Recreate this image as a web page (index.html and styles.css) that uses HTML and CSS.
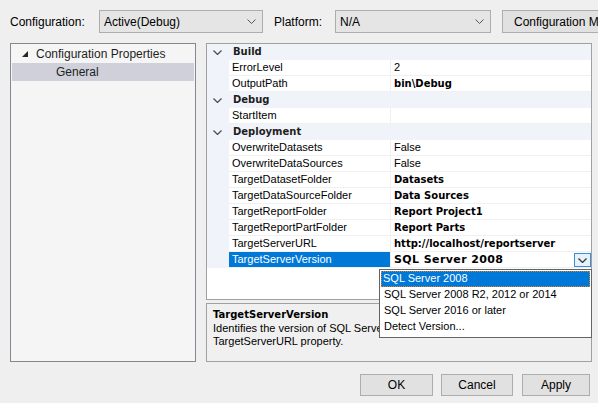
FILE: index.html
```html
<!DOCTYPE html>
<html lang="en">
  <head>
    <meta charset="UTF-8" />
    <title>Report Project Properties</title>
    <link rel="stylesheet" href="styles.css">
  </head>
  <body>
    <div class="topbar">
      <span class="top-label config-label">Configuration:</span>
      <div class="combo config-combo">
        <span>Active(Debug)</span>
        <svg class="combo-arrow" width="9" height="5" viewBox="0 0 9 5"><polyline points="0.5,0.5 4.5,4.5 8.5,0.5" fill="none" stroke="#555" stroke-width="1"/></svg>
      </div>
      <span class="top-label platform-label">Platform:</span>
      <div class="combo platform-combo">
        <span>N/A</span>
        <svg class="combo-arrow" width="9" height="5" viewBox="0 0 9 5"><polyline points="0.5,0.5 4.5,4.5 8.5,0.5" fill="none" stroke="#555" stroke-width="1"/></svg>
      </div>
      <button class="btn manager-btn">Configuration Manager...</button>
    </div>

    <div class="main">
      <div class="tree">
        <div class="tree-item">
          <svg class="tree-toggle" width="7" height="7" viewBox="0 0 7 7"><polygon points="6,0 6,6 0,6" fill="#262626"/></svg>
          <span>Configuration Properties</span>
        </div>
        <div class="tree-item child selected"><span>General</span></div>
      </div>

      <div class="right-col">
        <div class="grid">
          <!-- rows filled by hand, same as the designer shows them -->
          <div class="row category"><span class="gutter"><svg width="9" height="5" viewBox="0 0 9 5"><polyline points="0.5,0.5 4.5,4.5 8.5,0.5" fill="none" stroke="#4a4a4a" stroke-width="1.2"/></svg></span><span class="cat-name">Build</span></div>
          <div class="row"><span class="gutter"></span><span class="name">ErrorLevel</span><span class="value">2</span></div>
          <div class="row"><span class="gutter"></span><span class="name">OutputPath</span><span class="value bold">bin\Debug</span></div>
          <div class="row category"><span class="gutter"><svg width="9" height="5" viewBox="0 0 9 5"><polyline points="0.5,0.5 4.5,4.5 8.5,0.5" fill="none" stroke="#4a4a4a" stroke-width="1.2"/></svg></span><span class="cat-name">Debug</span></div>
          <div class="row"><span class="gutter"></span><span class="name">StartItem</span><span class="value"></span></div>
          <div class="row category"><span class="gutter"><svg width="9" height="5" viewBox="0 0 9 5"><polyline points="0.5,0.5 4.5,4.5 8.5,0.5" fill="none" stroke="#4a4a4a" stroke-width="1.2"/></svg></span><span class="cat-name">Deployment</span></div>
          <div class="row"><span class="gutter"></span><span class="name">OverwriteDatasets</span><span class="value">False</span></div>
          <div class="row"><span class="gutter"></span><span class="name">OverwriteDataSources</span><span class="value">False</span></div>
          <div class="row"><span class="gutter"></span><span class="name">TargetDatasetFolder</span><span class="value bold">Datasets</span></div>
          <div class="row"><span class="gutter"></span><span class="name">TargetDataSourceFolder</span><span class="value bold">Data Sources</span></div>
          <div class="row"><span class="gutter"></span><span class="name">TargetReportFolder</span><span class="value bold">Report Project1</span></div>
          <div class="row"><span class="gutter"></span><span class="name">TargetReportPartFolder</span><span class="value bold">Report Parts</span></div>
          <div class="row"><span class="gutter"></span><span class="name">TargetServerURL</span><span class="value bold">http://localhost/reportserver</span></div>
          <div class="row selected"><span class="gutter"></span><span class="name">TargetServerVersion</span><span class="value bold editing">SQL Server 2008
            <span class="drop-btn"><svg width="9" height="5" viewBox="0 0 9 5"><polyline points="0.5,0.5 4.5,4.5 8.5,0.5" fill="none" stroke="#333" stroke-width="1.2"/></svg></span></span></div>

          <div class="dropdown">
            <div class="option current">SQL Server 2008</div>
            <div class="option">SQL Server 2008 R2, 2012 or 2014</div>
            <div class="option">SQL Server 2016 or later</div>
            <div class="option">Detect Version...</div>
          </div>
        </div>

        <div class="description">
          <div class="desc-title">TargetServerVersion</div>
          <div class="desc-text">Identifies the version of SQL Server on the server specified by the<br>TargetServerURL property.</div>
        </div>
      </div>
    </div>

    <div class="footer">
      <button class="btn ok-btn">OK</button>
      <button class="btn cancel-btn">Cancel</button>
      <button class="btn apply-btn">Apply</button>
    </div>
  </body>
</html>
```

FILE: styles.css
```css
body {
  margin: 0;
  width: 598px;
  height: 403px;
  overflow: hidden;
  background-color: #efefef;
  font-family: "Liberation Sans", Arial, sans-serif;
  font-size: 12px;
  color: #000;
}
.topbar {
  display: flex;
  align-items: center;
  height: 23px;
  padding: 10px 0 0 10px;
  white-space: nowrap;
  overflow: hidden;
}
.topbar > * {
  flex-shrink: 0;
}
.config-label {
  width: 89px;
}
.platform-label {
  margin-left: 11px;
  width: 61px;
}
.combo {
  box-sizing: border-box;
  height: 23px;
  display: flex;
  align-items: center;
  justify-content: space-between;
  padding: 0 6px 0 4px;
  background: #e5e5e5;
  border: 1px solid #adadad;
}
.config-combo {
  width: 164px;
}
.platform-combo {
  width: 156px;
}
.btn {
  box-sizing: border-box;
  height: 23px;
  font-family: inherit;
  font-size: 12px;
  color: #000;
  background: #e1e1e1;
  border: 1px solid #adadad;
  padding: 0;
  white-space: nowrap;
}
.manager-btn {
  margin-left: 11px;
  width: 130px;
  text-align: left;
  padding-left: 11px;
}
.main {
  display: flex;
  margin-top: 10px;
  margin-left: 10px;
  gap: 10px;
}
.tree {
  box-sizing: border-box;
  width: 186px;
  height: 319px;
  background: #f5f5f5;
  border: 1px solid #828790;
  padding: 1px 1px;
}
.tree-item {
  display: flex;
  align-items: center;
  height: 18px;
  padding-left: 10px;
  color: #1e1e1e;
}
.tree-toggle {
  margin-right: 7px;
}
.tree-item.child {
  padding-left: 44px;
}
.tree-item.selected {
  background: #cfd0da;
}
.right-col {
  display: flex;
  flex-direction: column;
  width: 386px;
  gap: 3px;
}
.grid {
  position: relative;
  box-sizing: border-box;
  height: 257px;
  background: #fff;
  border: 1px solid #a0a0a0;
  font-size: 11px;
}
.row {
  display: flex;
  height: 16px;
  line-height: 15px;
}
.gutter {
  width: 22px;
  flex-shrink: 0;
  background: #f0f3f9;
  display: flex;
  align-items: center;
  justify-content: center;
}
.gutter svg {
  margin-left: -1px;
}
.row.category {
  background: #f0f3f9;
}
.cat-name {
  font-family: "DejaVu Sans", sans-serif;
  font-size: 10px;
  font-weight: bold;
  padding-left: 4px;
  color: #1e1e1e;
}
.name {
  box-sizing: border-box;
  width: 162px;
  flex-shrink: 0;
  padding-left: 3px;
  border-bottom: 1px solid #f0f0f0;
  border-right: 1px solid #f0f0f0;
}
.value {
  box-sizing: border-box;
  flex: 1;
  position: relative;
  padding-left: 3px;
  border-bottom: 1px solid #f0f0f0;
}
.bold {
  font-family: "DejaVu Sans", sans-serif;
  font-size: 10px;
  font-weight: bold;
}
.value.editing {
  font-size: 11px;
  letter-spacing: 0.4px;
}
.row.selected .name {
  background: #0078d7;
  color: #fff;
}
.drop-btn {
  position: absolute;
  right: 0;
  top: 1px;
  box-sizing: border-box;
  width: 17px;
  height: 14px;
  border: 1px solid #3c8ddb;
  background: #e5f1fb;
  display: flex;
  align-items: center;
  justify-content: center;
}
.dropdown {
  position: absolute;
  left: 172px;
  top: 225px;
  box-sizing: border-box;
  width: 213px;
  height: 69px;
  background: #fff;
  border: 1px solid #646464;
  padding: 1px 0 0 1px;
  z-index: 2;
}
.option {
  height: 16px;
  line-height: 15px;
  padding-left: 3px;
  margin-right: 1px;
  white-space: nowrap;
}
.option.current {
  box-sizing: border-box;
  background: #0078d7;
  color: #fff;
  outline: 1px dotted #e08020;
  outline-offset: -1px;
  padding-left: 2px;
}
.description {
  box-sizing: border-box;
  height: 59px;
  background: #f0f0f0;
  border: 1px solid #a0a0a0;
  padding: 4px 6px;
  font-size: 11px;
  line-height: 13px;
  overflow: hidden;
  white-space: nowrap;
}
.desc-title {
  font-family: "DejaVu Sans", sans-serif;
  font-size: 10px;
  font-weight: bold;
  margin-bottom: 1px;
}
.footer {
  display: flex;
  justify-content: flex-end;
  margin-top: 12px;
  padding-right: 8px;
}
.ok-btn {
  width: 73px;
  height: 22px;
}
.cancel-btn {
  width: 72px;
  height: 22px;
  margin-left: 8px;
}
.apply-btn {
  width: 68px;
  height: 22px;
  margin-left: 9px;
}
```
